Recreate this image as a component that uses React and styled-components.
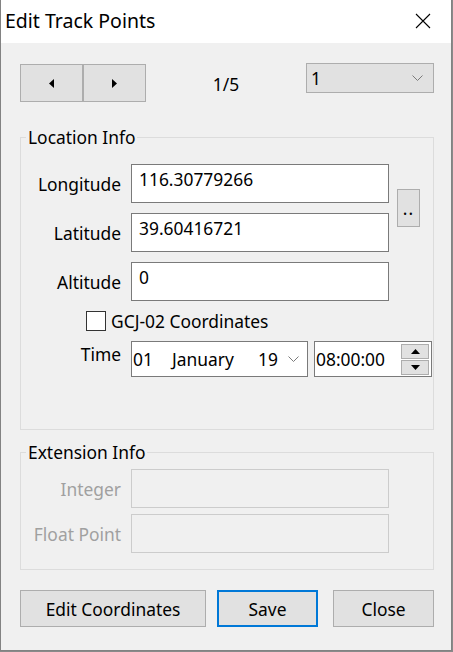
import styled, { createGlobalStyle } from "styled-components";

const FONT = `"Noto Sans", "Open Sans", "Liberation Sans", sans-serif`;

const GlobalStyle = createGlobalStyle`
	html, body {
		margin: 0;
		padding: 0;
		background: #8a8a8a;
	}
	* {
		box-sizing: border-box;
	}
`;

function App() {
	return (
		<>
			<GlobalStyle />
			<Window>
				<TitleBar>
					<Title>Edit Track Points</Title>
					<CloseBox>
						<svg width="16" height="16" viewBox="0 0 16 16">
							<path d="M1 1L15 15M15 1L1 15" stroke="#000" strokeWidth="1.1" />
						</svg>
					</CloseBox>
				</TitleBar>

				<Body>
					<TopRow>
						<NavGroup>
							<NavButton>
								<svg width="5" height="9" viewBox="0 0 5 9">
									<path d="M5 0L0 4.5L5 9Z" fill="#000" />
								</svg>
							</NavButton>
							<NavButton>
								<svg width="5" height="9" viewBox="0 0 5 9">
									<path d="M0 0L5 4.5L0 9Z" fill="#000" />
								</svg>
							</NavButton>
						</NavGroup>
						<Counter>1/5</Counter>
						<Combo>
							<span>1</span>
							<Chevron $right={10} />
						</Combo>
					</TopRow>

					<Group $top={23} $pad="15px 0 52px">
						<Legend>Location Info</Legend>
						<FormGrid $gap={10}>
							<Label>Longitude</Label>
							<TextBox>116.30779266</TextBox>
							<MoreButton>..</MoreButton>

							<Label>Latitude</Label>
							<TextBox>39.60416721</TextBox>

							<Label>Altitude</Label>
							<TextBox>0</TextBox>

							<CheckRow>
								<CheckBox />
								<span>GCJ-02 Coordinates</span>
							</CheckRow>

							<Label $top>Time</Label>
							<TimeFields>
								<DatePicker>
									<DatePart $w={39}>01</DatePart>
									<DatePart $w={86}>January</DatePart>
									<DatePart $w={30}>19</DatePart>
									<Chevron $right={9} />
								</DatePicker>
								<TimePicker>
									<span>08:00:00</span>
									<Spin>
										<SpinButton>
											<svg width="9" height="5" viewBox="0 0 9 5">
												<path d="M0 5L4.5 0L9 5Z" fill="#000" />
											</svg>
										</SpinButton>
										<SpinButton>
											<svg width="9" height="5" viewBox="0 0 9 5">
												<path d="M0 0L4.5 5L9 0Z" fill="#000" />
											</svg>
										</SpinButton>
									</Spin>
								</TimePicker>
							</TimeFields>
						</FormGrid>
					</Group>

					<Group $top={10} $pad="5px 0 16px">
						<Legend>Extension Info</Legend>
						<FormGrid $gap={6}>
							<Label $disabled>Integer</Label>
							<TextBox $disabled />
							<Label $disabled>Float Point</Label>
							<TextBox $disabled />
						</FormGrid>
					</Group>

					<Footer>
						<Button $w={186}>Edit Coordinates</Button>
						<Button $w={101} $default $ml="11px">
							Save
						</Button>
						<Button $w={101} $ml="auto">
							Close
						</Button>
					</Footer>
				</Body>
			</Window>
		</>
	);
}

export default App;

function Chevron({ $right = 10 }) {
	return (
		<ChevronWrap $right={$right}>
			<svg width="11" height="6" viewBox="0 0 11 6">
				<path d="M0.5 0.5L5.5 5.5L10.5 0.5" stroke="#7a7a7a" fill="none" strokeWidth="1" />
			</svg>
		</ChevronWrap>
	);
}

const Window = styled.div`
	width: 452px;
	height: 651px;
	background: #f0f0f0;
	border: 1px solid #828282;
	border-top: none;
	display: flex;
	flex-direction: column;
	font-family: ${FONT};
	font-size: 17.4px;
	line-height: 24px;
	color: #000;
`;

const TitleBar = styled.div`
	height: 43px;
	background: #fff;
	display: flex;
	align-items: center;
	justify-content: space-between;
	padding-left: 4px;
	flex-shrink: 0;
`;

const Title = styled.div`
	font-size: 19.5px;
	line-height: 26px;
	margin-top: -1px;
`;

const CloseBox = styled.div`
	width: 57px;
	height: 43px;
	display: flex;
	align-items: center;
	justify-content: center;
	padding-bottom: 1px;
`;

const Body = styled.div`
	padding: 20px 17px 0 19px;
	display: flex;
	flex-direction: column;
`;

const TopRow = styled.div`
	display: flex;
	align-items: flex-start;
	height: 39px;
`;

const NavGroup = styled.div`
	display: flex;
	margin-top: 1px;
`;

const NavButton = styled.div`
	width: 63px;
	height: 38px;
	border: 1px solid #adadad;
	background: #e1e1e1;
	display: flex;
	align-items: center;
	justify-content: center;
`;

const Counter = styled.div`
	flex: 1;
	text-align: center;
	padding-top: 9px;
`;

const Combo = styled.div`
	width: 128px;
	height: 30px;
	border: 1px solid #adadad;
	background: #e1e1e1;
	display: flex;
	align-items: center;
	padding-left: 4px;
`;

const ChevronWrap = styled.div`
	margin-left: auto;
	margin-right: ${(p) => p.$right}px;
	display: flex;
	align-items: center;
`;

const Group = styled.fieldset`
	margin: ${(p) => p.$top}px 0 0;
	padding: ${(p) => p.$pad};
	border: 1px solid #dcdcdc;
	min-width: 0;
`;

const Legend = styled.legend`
	margin-left: 5px;
	padding: 0 2px;
	font-size: 17.4px;
	line-height: 24px;
`;

const FormGrid = styled.div`
	display: grid;
	grid-template-columns: 110px 258px 31px;
	row-gap: ${(p) => p.$gap}px;
	align-items: center;
`;

const Label = styled.div`
	grid-column: 1;
	text-align: right;
	padding-right: 10px;
	color: ${(p) => (p.$disabled ? "#a0a0a0" : "#000")};
	align-self: ${(p) => (p.$top ? "start" : "center")};
	padding-top: ${(p) => (p.$top ? 1 : 0)}px;
`;

const TextBox = styled.div`
	grid-column: 2;
	height: 39px;
	border: 1px solid ${(p) => (p.$disabled ? "#cccccc" : "#7a7a7a")};
	background: ${(p) => (p.$disabled ? "#f0f0f0" : "#fff")};
	padding: 2px 7px;
	white-space: nowrap;
`;

const MoreButton = styled.div`
	grid-column: 3;
	grid-row: 1 / span 2;
	justify-self: end;
	width: 23px;
	height: 38px;
	border: 1px solid #adadad;
	background: #e1e1e1;
	display: flex;
	align-items: flex-end;
	justify-content: center;
	padding-bottom: 6px;
	letter-spacing: 1px;
`;

const CheckRow = styled.div`
	grid-column: 1 / -1;
	display: flex;
	align-items: center;
	gap: 5px;
	padding-left: 65px;
	height: 20px;
`;

const CheckBox = styled.div`
	width: 20px;
	height: 20px;
	border: 1px solid #333;
	background: #fff;
`;

const TimeFields = styled.div`
	grid-column: 2 / -1;
	display: flex;
	gap: 6px;
`;

const DatePicker = styled.div`
	width: 177px;
	height: 36px;
	flex-shrink: 0;
	border: 1px solid #7a7a7a;
	background: #fff;
	display: flex;
	align-items: center;
	padding-left: 1px;
`;

const DatePart = styled.span`
	width: ${(p) => p.$w}px;
	flex-shrink: 0;
	white-space: nowrap;
`;

const TimePicker = styled.div`
	width: 118px;
	height: 36px;
	flex-shrink: 0;
	border: 1px solid #7a7a7a;
	background: #fff;
	display: flex;
	align-items: center;
	padding-left: 1px;
`;

const Spin = styled.div`
	margin-left: auto;
	margin-right: 2px;
	display: flex;
	flex-direction: column;
	gap: 1px;
`;

const SpinButton = styled.div`
	width: 28px;
	height: 15px;
	border: 1px solid #adadad;
	background: #e1e1e1;
	display: flex;
	align-items: center;
	justify-content: center;
`;

const Footer = styled.div`
	display: flex;
	margin-top: 20px;
`;

const Button = styled.div`
	width: ${(p) => p.$w}px;
	height: 37px;
	margin-left: ${(p) => p.$ml || 0};
	border: ${(p) => (p.$default ? "2px solid #0078d7" : "1px solid #adadad")};
	background: #e1e1e1;
	display: flex;
	align-items: center;
	justify-content: center;
`;
